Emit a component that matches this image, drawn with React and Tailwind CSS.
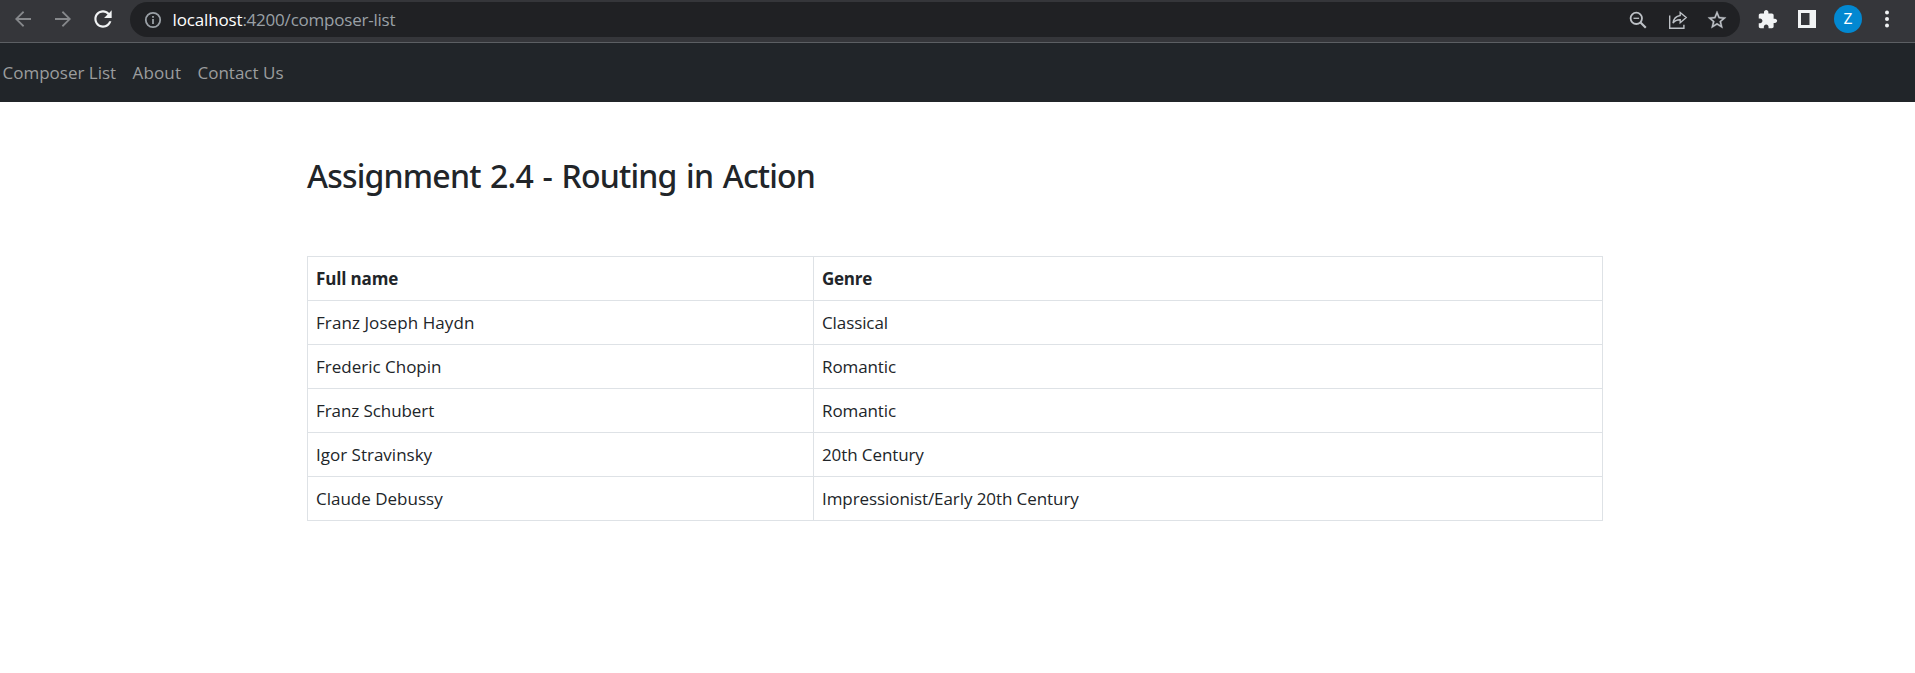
const composers = [
  { name: "Franz Joseph Haydn", genre: "Classical", nameClass: "tracking-[0.08px]" },
  { name: "Frederic Chopin", genre: "Romantic" },
  { name: "Franz Schubert", genre: "Romantic", nameClass: "tracking-[-0.08px]" },
  { name: "Igor Stravinsky", genre: "20th Century" },
  { name: "Claude Debussy", genre: "Impressionist/Early 20th Century", genreClass: "tracking-[-0.08px]" },
];

function Icon({ className, children, viewBox = "0 0 24 24" }) {
  return (
    <svg viewBox={viewBox} fill="currentColor" className={`shrink-0 ${className}`} aria-hidden="true">
      {children}
    </svg>
  );
}

function BrowserBar() {
  return (
    <header className="flex h-[43px] items-start border-b border-[#5c5f63] bg-[#35363a] pl-[11px]">
      <div className="flex h-[38px] items-center">
        <Icon className="size-6 text-[#86888b]">
          <path d="M20 11.1H7.5l5.7-5.7L12 4.1 4 12l8 7.9 1.2-1.3-5.7-5.7H20z" />
        </Icon>
        <Icon className="ml-4 size-6 text-[#86888b]">
          <path d="M4 11.1h12.5l-5.7-5.7L12 4.1l8 7.9-8 7.9-1.2-1.3 5.7-5.7H4z" />
        </Icon>
        <Icon className="ml-[15px] size-[26px] text-[#f1f3f4]">
          <path d="M17.65 6.35C16.2 4.9 14.21 4 12 4c-4.42 0-7.99 3.58-7.99 8s3.57 8 7.99 8c3.73 0 6.84-2.55 7.73-6h-2.08c-.82 2.33-3.04 4-5.65 4-3.31 0-6-2.69-6-6s2.69-6 6-6c1.66 0 3.14.69 4.22 1.78L13 11h7V4l-2.35 2.35z" />
        </Icon>
      </div>
      <div className="mt-0.5 ml-[14px] flex h-[35px] w-[1610px] items-center rounded-full bg-[#202124] pl-[13px] pr-3 text-[#9aa0a6]">
        <svg viewBox="0 0 20 20" className="size-5" fill="none" stroke="currentColor" aria-hidden="true">
          <circle cx="10" cy="10" r="7.2" strokeWidth="1.800" />
          <path d="M10 9v5M10 6v1.800" strokeWidth="1.800" />
        </svg>
        <span className="ml-[9.5px] flex-1 whitespace-nowrap leading-6">
          <span className="tracking-[-0.15px] text-white">localhost</span>
          <span className="tracking-[-0.22px]">:4200/composer-list</span>
        </span>
        <div className="flex items-center text-[#bdc1c6]">
          <svg viewBox="0 0 18 18" className="size-[18px]" fill="none" stroke="currentColor" aria-hidden="true">
            <circle cx="7.300" cy="7.300" r="5.700" strokeWidth="1.800" />
            <path d="M4.500 7.300h5.600" strokeWidth="1.300" />
            <path d="M11.300 11.300l5.500 5.500" strokeWidth="2.200" />
          </svg>
          <svg viewBox="0 0 20 20" className="ml-[21px] size-5" fill="none" stroke="currentColor" strokeWidth="1.400" aria-hidden="true">
            <path d="M1.700 5.500v12.800h14.200v-3.500" />
            <path d="M12.200 2.500l6 5-6 5.300V9.800c-3.300-.1-5.600 1-7.200 3.400.5-4.300 3-7.100 7.200-7.700z" strokeLinejoin="miter" />
          </svg>
          <Icon className="ml-[18px] size-[22px]">
            <path
              stroke="currentColor"
              strokeWidth="0.300"
              d="M22 9.240l-7.190-.62L12 2 9.190 8.630 2 9.240l5.460 4.730L5.820 21 12 17.270 18.180 21l-1.630-7.030L22 9.240zM12 15.400l-3.760 2.270 1-4.280-3.320-2.880 4.380-.38L12 6.100l1.710 4.040 4.380.38-3.320 2.880 1 4.280L12 15.400z"
            />
          </Icon>
        </div>
      </div>
      <div className="flex h-[38px] flex-1 items-center text-[#f1f3f4]">
        <Icon className="ml-[17px] size-[21px]">
          <path d="M20.500 11H19V7c0-1.100-.9-2-2-2h-4V3.500C13 2.120 11.880 1 10.500 1S8 2.120 8 3.500V5H4c-1.100 0-1.990.9-1.990 2v3.800H3.500c1.490 0 2.700 1.210 2.700 2.700s-1.210 2.700-2.700 2.700H2V20c0 1.100.9 2 2 2h3.800v-1.500c0-1.490 1.210-2.700 2.700-2.700s2.700 1.210 2.700 2.700V22H17c1.100 0 2-.9 2-2v-4h1.500c1.380 0 2.500-1.120 2.500-2.500S21.880 11 20.500 11z" />
        </Icon>
        <Icon className="ml-5 size-[18px]" viewBox="0 0 18 18">
          <path fillRule="evenodd" d="M0 0h18v18H0zM3 3v12h8.500V3z" />
        </Icon>
        <div className="ml-[18px] flex size-7 items-center justify-center rounded-full bg-[#0288d1] font-['Roboto',sans-serif] text-[15px] text-white">
          Z
        </div>
        <Icon className="ml-[13px] size-6">
          <circle cx="12" cy="5.500" r="2" />
          <circle cx="12" cy="12" r="2" />
          <circle cx="12" cy="18.500" r="2" />
        </Icon>
      </div>
    </header>
  );
}

export default function App() {
  return (
    <div className="min-h-screen overflow-hidden bg-white font-['Open_Sans',sans-serif] text-[17px] text-[#212529]">
      <BrowserBar />
      <nav className="flex h-[59px] items-center bg-[#212529] pl-[2.500px] text-[#9b9d9e]">
        <a className="w-[130px]">Composer List</a>
        <a className="w-[65px] tracking-[0.15px]">About</a>
        <a>Contact Us</a>
      </nav>
      <main className="ml-[307px] w-[1296px] pt-[53px]">
        <h1 className="font-['Noto_Sans',sans-serif] text-[32px] leading-[42px] font-medium tracking-[-0.8px] [word-spacing:2px]">
          Assignment 2.4 - Routing in Action
        </h1>
        <table className="mt-[59px] w-full table-fixed border-separate border-spacing-0 border-t border-l border-[#dee2e6] text-left">
          <colgroup>
            <col className="w-[506px]" />
            <col />
          </colgroup>
          <thead>
            <tr className="h-11">
              <th className="border-r border-b border-[#dee2e6] px-2 py-0 font-bold tracking-[-0.15px]">Full name</th>
              <th className="border-r border-b border-[#dee2e6] px-2 py-0 font-bold tracking-[-0.25px]">Genre</th>
            </tr>
          </thead>
          <tbody>
            {composers.map((c) => (
              <tr key={c.name} className="h-11">
                <td className={`border-r border-b border-[#dee2e6] px-2 py-0 ${c.nameClass ?? ""}`}>{c.name}</td>
                <td className={`border-r border-b border-[#dee2e6] px-2 py-0 ${c.genreClass ?? "tracking-[-0.1px]"}`}>{c.genre}</td>
              </tr>
            ))}
          </tbody>
        </table>
      </main>
    </div>
  );
}
